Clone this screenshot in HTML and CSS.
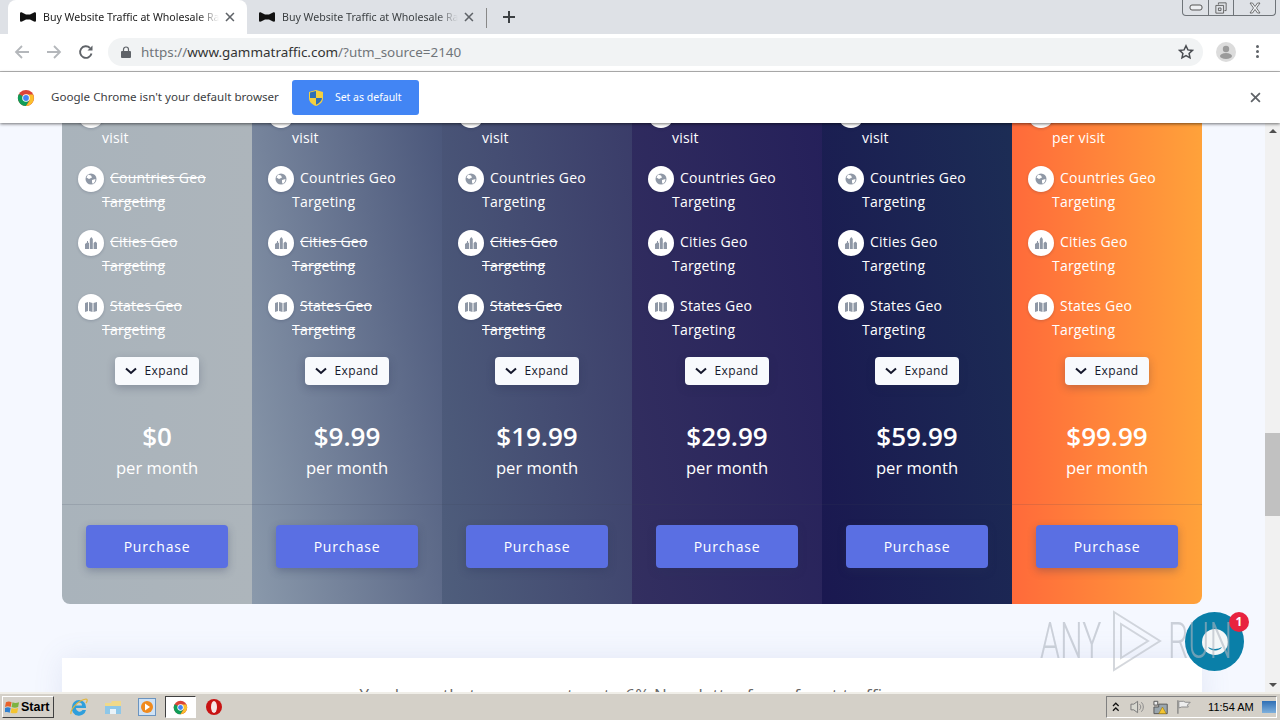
FILE: index.html
```html
<!DOCTYPE html>
<html lang="en">
<head>
    <meta charset="UTF-8">
    <title>Buy Website Traffic at Wholesale Rates</title>
    <link rel="stylesheet" href="styles.css">
</head>
<body>
    <svg class="defs" width="0" height="0">
        <symbol id="bow" viewBox="0 0 16 10"><path d="M0 1.500C0 .5 1 0 2 .4L6 2.600h4L14 .4C15 0 16 .5 16 1.500v7c0 1-1 1.500-2 1.100L10 7.400H6L2 9.600C1 10 0 9.500 0 8.500z" fill="#111"/></symbol>
        <symbol id="close" viewBox="0 0 10 10"><path d="M1 1l8 8M9 1l-8 8" fill="none" stroke="currentColor" stroke-width="1.600"/></symbol>
        <symbol id="chrome" viewBox="0 0 20 20"><circle cx="10" cy="10" r="9" fill="#db4437"/><path d="M10 10L2.200 5.500A9 9 0 0 0 10 19l4.500-7.800z" fill="#0f9d58"/><path d="M10 6h7.800A9 9 0 0 1 10 19l4-6z" fill="#fbc02d"/><circle cx="10" cy="10" r="4.200" fill="#fff"/><circle cx="10" cy="10" r="3.200" fill="#4285f4"/></symbol>
        <symbol id="globe" viewBox="0 0 12 12"><circle cx="6" cy="6" r="5.500" fill="#8f98a6"/><path d="M3 1.500l3 1 1 2-3 1.500-2.500-1.500zM7 7l3.500-1-.5 2.500-2 2.500-1-1.500z" fill="#fff"/></symbol>
        <symbol id="city" viewBox="0 0 12 12"><path d="M0 12V7l2-1.500V4h1v1.500L4 6v6zM4.800 12V2l1.500-2 1.500 2v10zM8.600 12V6l1.700-1.500L12 6v6z" fill="#8f98a6"/></symbol>
        <symbol id="map" viewBox="0 0 12 12"><path d="M0 2l3-1v9l-3 1zM4 1l3.500 1v9L4 10zM8.500 2L12 1v9l-3.500 1z" fill="#8f98a6"/></symbol>
        <symbol id="chevron" viewBox="0 0 12 8"><path d="M1 1.500L6 6l5-4.500" fill="none" stroke="#14172b" stroke-width="2"/></symbol>
    </svg>

    <!-- browser tabs -->
    <div class="tab-strip">
        <div class="tab tab-active">
            <svg class="favicon"><use href="#bow"/></svg>
            <span class="tab-title">Buy Website Traffic at Wholesale Rates</span>
            <svg class="tab-close"><use href="#close"/></svg>
        </div>
        <div class="tab">
            <svg class="favicon"><use href="#bow"/></svg>
            <span class="tab-title">Buy Website Traffic at Wholesale Rates</span>
            <svg class="tab-close"><use href="#close"/></svg>
        </div>
        <span class="tab-sep"></span>
        <svg class="new-tab" viewBox="0 0 12 12"><path d="M6 0v12M0 6h12" stroke="#3c4043" stroke-width="2"/></svg>
        <div class="window-btns">
            <span class="win-btn win-min"><svg viewBox="0 0 14 8"><rect x="1" y="1" width="12" height="5" rx="2" fill="#eef0f3" stroke="#555"/></svg></span>
            <span class="win-btn win-max"><svg viewBox="0 0 14 14"><path d="M4 3V1h9v9h-2M1 4h9v9H1zM4 7h3v3H4z" fill="none" stroke="#555"/></svg></span>
            <span class="win-btn win-x"><svg viewBox="0 0 14 10"><path d="M2 0l3.500 5L2 10h2.500L7 6.500 9.500 10H12L8.500 5 12 0H9.500L7 3.500 4.500 0z" fill="#eef0f3" stroke="#555" stroke-width=".8"/></svg></span>
        </div>
    </div>

    <!-- address bar -->
    <div class="toolbar">
        <svg class="nav-icon" viewBox="0 0 16 16"><path d="M15 8H2M8 2L2 8l6 6" fill="none" stroke="#b4b7bb" stroke-width="1.800"/></svg>
        <svg class="nav-icon" viewBox="0 0 16 16"><path d="M1 8h13M8 2l6 6-6 6" fill="none" stroke="#b4b7bb" stroke-width="1.800"/></svg>
        <svg class="nav-icon" viewBox="0 0 16 16"><path d="M13.500 9.500A5.800 5.800 0 1 1 12 4" fill="none" stroke="#5f6368" stroke-width="1.900"/><path d="M14.500 1.500v5h-5z" fill="#5f6368"/></svg>
        <div class="omnibox">
            <svg class="lock" viewBox="0 0 10 12"><path d="M2.500 5V3.500a2.500 2.500 0 0 1 5 0V5" fill="none" stroke="#5f6368" stroke-width="1.200"/><rect y="5" width="10" height="7" rx="1" fill="#5f6368"/></svg>
            <span class="url"><span class="url-dim">https://</span>www.gammatraffic.com<span class="url-dim">/?utm_source=2140</span></span>
            <svg class="star" viewBox="0 0 16 16"><path d="M8 1.800l1.900 4.100 4.500.5-3.300 3 .9 4.400L8 11.600l-4 2.200.9-4.400-3.300-3 4.500-.5z" fill="none" stroke="#4a4d52" stroke-width="1.500"/></svg>
        </div>
        <div class="avatar"><svg viewBox="0 0 20 20"><circle cx="10" cy="7" r="3.200" fill="#9b9b9b"/><ellipse cx="10" cy="14" rx="6" ry="3" fill="#9b9b9b"/></svg></div>
        <div class="menu-dots"><i></i><i></i><i></i></div>
    </div>

    <!-- default browser prompt -->
    <div class="infobar">
        <svg class="chrome-logo"><use href="#chrome"/></svg>
        <span class="info-text">Google Chrome isn't your default browser</span>
        <div class="default-btn">
            <svg class="shield" viewBox="0 0 14 16"><path d="M7 0l7 2v6c0 4-3 6.500-7 8-4-1.500-7-4-7-8V2z" fill="#f4d03f"/><path d="M7 1v7H1V2.600zM7 8h6c0 3-2.500 5-6 6.800z" fill="#2f6fb5"/></svg>
            <span class="default-label">Set as default</span>
        </div>
        <svg class="info-close"><use href="#close"/></svg>
    </div>

    <!-- scrolled page -->
    <div class="viewport">
        <div class="page">
            <div class="pricing">
                <div class="plan plan-free">
                    <ul class="features">
                        <li><span class="ficon"></span>Pay per<br>visit</li>
                        <li class="off"><span class="ficon"><svg><use href="#globe"/></svg></span><span class="ftext">Countries Geo Targeting</span></li>
                        <li class="off"><span class="ficon"><svg><use href="#city"/></svg></span><span class="ftext">Cities Geo Targeting</span></li>
                        <li class="off"><span class="ficon"><svg><use href="#map"/></svg></span><span class="ftext">States Geo Targeting</span></li>
                    </ul>
                    <div class="expand"><svg><use href="#chevron"/></svg>Expand</div>
                    <div class="price">$0</div>
                    <div class="period">per month</div>
                    <div class="plan-foot"><div class="purchase">Purchase</div></div>
                </div>
                <div class="plan plan-a">
                    <ul class="features">
                        <li><span class="ficon"></span>Pay per<br>visit</li>
                        <li><span class="ficon"><svg><use href="#globe"/></svg></span><span class="ftext">Countries Geo Targeting</span></li>
                        <li class="off"><span class="ficon"><svg><use href="#city"/></svg></span><span class="ftext">Cities Geo Targeting</span></li>
                        <li class="off"><span class="ficon"><svg><use href="#map"/></svg></span><span class="ftext">States Geo Targeting</span></li>
                    </ul>
                    <div class="expand"><svg><use href="#chevron"/></svg>Expand</div>
                    <div class="price">$9.99</div>
                    <div class="period">per month</div>
                    <div class="plan-foot"><div class="purchase">Purchase</div></div>
                </div>
                <div class="plan plan-b">
                    <ul class="features">
                        <li><span class="ficon"></span>Pay per<br>visit</li>
                        <li><span class="ficon"><svg><use href="#globe"/></svg></span><span class="ftext">Countries Geo Targeting</span></li>
                        <li class="off"><span class="ficon"><svg><use href="#city"/></svg></span><span class="ftext">Cities Geo Targeting</span></li>
                        <li class="off"><span class="ficon"><svg><use href="#map"/></svg></span><span class="ftext">States Geo Targeting</span></li>
                    </ul>
                    <div class="expand"><svg><use href="#chevron"/></svg>Expand</div>
                    <div class="price">$19.99</div>
                    <div class="period">per month</div>
                    <div class="plan-foot"><div class="purchase">Purchase</div></div>
                </div>
                <div class="plan plan-c">
                    <ul class="features">
                        <li><span class="ficon"></span>Pay per<br>visit</li>
                        <li><span class="ficon"><svg><use href="#globe"/></svg></span><span class="ftext">Countries Geo Targeting</span></li>
                        <li><span class="ficon"><svg><use href="#city"/></svg></span><span class="ftext">Cities Geo Targeting</span></li>
                        <li><span class="ficon"><svg><use href="#map"/></svg></span><span class="ftext">States Geo Targeting</span></li>
                    </ul>
                    <div class="expand"><svg><use href="#chevron"/></svg>Expand</div>
                    <div class="price">$29.99</div>
                    <div class="period">per month</div>
                    <div class="plan-foot"><div class="purchase">Purchase</div></div>
                </div>
                <div class="plan plan-d">
                    <ul class="features">
                        <li><span class="ficon"></span>Pay per<br>visit</li>
                        <li><span class="ficon"><svg><use href="#globe"/></svg></span><span class="ftext">Countries Geo Targeting</span></li>
                        <li><span class="ficon"><svg><use href="#city"/></svg></span><span class="ftext">Cities Geo Targeting</span></li>
                        <li><span class="ficon"><svg><use href="#map"/></svg></span><span class="ftext">States Geo Targeting</span></li>
                    </ul>
                    <div class="expand"><svg><use href="#chevron"/></svg>Expand</div>
                    <div class="price">$59.99</div>
                    <div class="period">per month</div>
                    <div class="plan-foot"><div class="purchase">Purchase</div></div>
                </div>
                <div class="plan plan-e">
                    <ul class="features">
                        <li><span class="ficon"></span>Pay<br>per visit</li>
                        <li><span class="ficon"><svg><use href="#globe"/></svg></span><span class="ftext">Countries Geo Targeting</span></li>
                        <li><span class="ficon"><svg><use href="#city"/></svg></span><span class="ftext">Cities Geo Targeting</span></li>
                        <li><span class="ficon"><svg><use href="#map"/></svg></span><span class="ftext">States Geo Targeting</span></li>
                    </ul>
                    <div class="expand"><svg><use href="#chevron"/></svg>Expand</div>
                    <div class="price">$99.99</div>
                    <div class="period">per month</div>
                    <div class="plan-foot"><div class="purchase">Purchase</div></div>
                </div>
            </div>
            <div class="note">You know that you can get up to 6% Newsletter free of cost traffic</div>
        </div>

        <div class="scrollbar">
            <span class="arrow arrow-up"></span>
            <div class="track"><div class="thumb"></div></div>
            <span class="arrow arrow-down"></span>
        </div>

        <!-- chat bubble and watermark sit over the page -->
        <div class="chat">
            <svg viewBox="0 0 30 30"><circle cx="15" cy="15" r="13" fill="#f4f7f8"/><path d="M8 20c4 2.500 10 2.500 14 0-2 4.500-12 4.500-14 0z" fill="#0a7fa8"/></svg>
            <span class="chat-badge">1</span>
        </div>
        <div class="watermark">
            <span class="wm-text">ANY</span>
            <svg viewBox="0 0 50 62"><path d="M2 2l46 29L2 60zM9 14v34l27-17z" fill="none" stroke="#b9bec6" stroke-width="2"/></svg>
            <span class="wm-text">RUN</span>
        </div>
    </div>

    <!-- windows taskbar -->
    <div class="taskbar">
        <div class="start">
            <svg viewBox="0 0 16 14"><path d="M1 2c2-1 4-1 6 0l-1 5c-2-1-4-1-6 0z" fill="#e8622a"/><path d="M8 2c2 1 4 1 7 0l-1 5c-2 1-5 1-7 0z" fill="#7cb342"/><path d="M0 8c2-1 4-1 6 0l-1 5c-2-1-4-1-6 0z" fill="#2f80d0"/><path d="M7 8c2 1 4 1 7 0l-1 5c-2 1-5 1-7 0z" fill="#f4c430"/></svg>
            <span>Start</span>
        </div>
        <div class="quick">
            <svg class="tray-app" viewBox="0 0 18 18"><path d="M2 9a7 7 0 0 1 14 0v1H6a3.500 3.500 0 0 0 6.500 2H16a7 7 0 0 1-14-3zM6 7.500h6a3 3 0 0 0-6 0z" fill="#2f9fdc"/><path d="M1 16C0 12 8 2 16 1c2 0 1 3 0 4" fill="none" stroke="#e3b63a" stroke-width="1.200"/></svg>
            <svg class="tray-app" viewBox="0 0 18 18"><path d="M1 5h6l1-2h9v12H1z" fill="#f0d98a"/><path d="M1 8h16v8H1z" fill="#8ec7e8"/><path d="M6 11h6v5H6z" fill="#e9f3f9"/></svg>
            <svg class="tray-app" viewBox="0 0 18 18"><rect x=".5" y=".5" width="17" height="17" fill="#cfe2f5" stroke="#6a94c0"/><circle cx="9" cy="9" r="6" fill="#f08a1d"/><path d="M7 5.500l5 3.500-5 3.500z" fill="#fff"/></svg>
            <div class="app-active"><svg><use href="#chrome"/></svg></div>
            <svg class="tray-app" viewBox="0 0 18 18"><circle cx="9" cy="9" r="8" fill="#c81313"/><ellipse cx="9" cy="9" rx="3" ry="6" fill="#f6e6e6"/></svg>
        </div>
        <div class="tray">
            <svg class="tray-chevrons" viewBox="0 0 8 10"><path d="M1 4l3-3 3 3M1 9l3-3 3 3" fill="none" stroke="#111" stroke-width="1.300"/></svg>
            <svg class="tray-icon" viewBox="0 0 16 16"><path d="M1 5h3l4-3v12l-4-3H1z" fill="#d8d8d0" stroke="#777"/><path d="M10 5a4 4 0 0 1 0 6M12 3a7 7 0 0 1 0 10" fill="none" stroke="#888"/></svg>
            <svg class="tray-icon" viewBox="0 0 16 16"><path d="M1 2h4v4H1z" fill="#eee" stroke="#555"/><path d="M6 5h9v10H1V8h5z" fill="#9aa6ad" stroke="#555"/><path d="M10 8l4 7H6z" fill="#f4c430" stroke="#8a6d00" stroke-width=".5"/></svg>
            <svg class="tray-icon" viewBox="0 0 16 16"><path d="M2 1v14" stroke="#777" stroke-width="1.200"/><path d="M3 2h5l2 1h5l-3 3 1 2H6L3 9z" fill="#eee" stroke="#888"/></svg>
            <span class="clock">11:54 AM</span>
            <span class="show-desktop"></span>
        </div>
    </div>
</body>
</html>
```

FILE: styles.css
```css
* {
    margin: 0;
    padding: 0;
    box-sizing: border-box;
}
html, body {
    width: 1280px;
    height: 720px;
    overflow: hidden;
}
body {
    display: flex;
    flex-direction: column;
    font-family: "Open Sans", "Liberation Sans", sans-serif;
    background-color: #fff;
}
.defs {
    position: absolute;
}

/* tabs */
.tab-strip {
    height: 34px;
    flex-shrink: 0;
    display: flex;
    align-items: flex-end;
    padding-left: 8px;
    background-color: #dee1e6;
}
.tab {
    width: 239px;
    height: 34px;
    display: flex;
    align-items: center;
    padding: 0 12px 1px;
    font-family: "Noto Sans", "Open Sans", sans-serif;
    font-size: 10.6px;
    color: #3c4043;
}
.tab-active {
    background-color: #fff;
    border-radius: 8px 8px 0 0;
    color: #222;
}
.favicon {
    width: 16px;
    height: 10px;
    margin-right: 7px;
    flex-shrink: 0;
}
.tab-title {
    width: 178px;
    white-space: nowrap;
    overflow: hidden;
    -webkit-mask-image: linear-gradient(to right, #000 88%, transparent);
    mask-image: linear-gradient(to right, #000 88%, transparent);
}
.tab-close {
    width: 10px;
    height: 10px;
    margin-left: 6px;
    color: #5f6368;
}
.tab-sep {
    width: 1px;
    height: 20px;
    margin: 0 0 6px 0;
    background-color: #888;
}
.new-tab {
    width: 12px;
    height: 12px;
    margin: 0 0 11px 16px;
}
.window-btns {
    display: flex;
    margin-left: auto;
    margin-right: 4px;
    align-self: flex-start;
    height: 16px;
    border: 1px solid #6f7479;
    border-top: 0;
    border-radius: 0 0 4px 4px;
}
.win-btn {
    display: flex;
    align-items: center;
    justify-content: center;
    border-left: 1px solid #6f7479;
}
.win-btn svg {
    width: 14px;
    height: 12px;
}
.win-min {
    width: 25px;
    border-left: 0;
}
.win-max {
    width: 25px;
}
.win-x {
    width: 42px;
}

/* address bar */
.toolbar {
    height: 38px;
    flex-shrink: 0;
    display: flex;
    align-items: center;
    padding: 0 0 2px 14px;
    background-color: #fff;
    border-bottom: 1px solid #b9b9b9;
}
.nav-icon {
    width: 16px;
    height: 16px;
    margin-right: 16px;
}
.omnibox {
    width: 1095px;
    height: 28px;
    display: flex;
    align-items: center;
    padding: 0 9px 0 13px;
    margin-left: -2px;
    background-color: #f1f3f4;
    border-radius: 14px;
}
.lock {
    width: 10px;
    height: 12px;
}
.url {
    margin-left: 10px;
    font-family: "Noto Sans", "Open Sans", sans-serif;
    font-size: 13.45px;
    color: #333;
}
.url-dim {
    color: #70757a;
}
.star {
    width: 16px;
    height: 16px;
    margin-left: auto;
}
.avatar {
    width: 20px;
    height: 20px;
    margin-left: 13px;
    border-radius: 50%;
    background-color: #dcdcdc;
}
.menu-dots {
    display: flex;
    flex-direction: column;
    gap: 2px;
    margin-left: 20px;
}
.menu-dots i {
    width: 3px;
    height: 3px;
    border-radius: 50%;
    background-color: #5f6368;
}

/* infobar */
.infobar {
    height: 51px;
    flex-shrink: 0;
    display: flex;
    align-items: center;
    padding: 0 17px;
    background-color: #fff;
    position: relative;
    z-index: 2;
    box-shadow: 0 1px 3px rgba(0, 0, 0, .55);
}
.chrome-logo {
    width: 18px;
    height: 18px;
}
.info-text {
    margin: 0 0 2px 16px;
    font-family: "Noto Sans", "Open Sans", sans-serif;
    font-size: 11.6px;
    color: #3c4043;
}
.default-btn {
    width: 127px;
    height: 35px;
    display: flex;
    align-items: center;
    margin-left: 13px;
    padding-left: 17px;
    border-radius: 3px;
    background-color: #4285f4;
    font-family: "Noto Sans", "Open Sans", sans-serif;
    font-size: 10.5px;
    color: #fff;
}
.default-label {
    margin-bottom: 2px;
}
.shield {
    width: 14px;
    height: 16px;
    margin-right: 12px;
}
.info-close {
    width: 11px;
    height: 11px;
    margin-left: auto;
    margin-right: 2px;
    color: #5f6368;
}

/* page */
.viewport {
    flex: 1;
    min-height: 0;
    display: flex;
    position: relative;
    overflow: hidden;
    background-color: #f5f8ff;
}
.page {
    flex: 1;
    min-width: 0;
    padding: 0 63px 0 62px;
}
.pricing {
    display: flex;
    margin-top: -22px;
    border-radius: 8px;
    overflow: hidden;
}
.plan {
    width: 190px;
    flex-shrink: 0;
    color: #fff;
    text-align: center;
}
.plan-free {
    background: linear-gradient(to right, #a9b3bb, #adb5bb);
}
.plan-a {
    background: linear-gradient(80deg, #8a99ab, #4a567a);
}
.plan-b {
    background: linear-gradient(80deg, #4f5e7c, #3a3c69);
}
.plan-c {
    background: linear-gradient(80deg, #332f60, #25205a);
}
.plan-d {
    background: linear-gradient(80deg, #1a1850, #1c2d55);
}
.plan-e {
    background: linear-gradient(to right, #ff6a3a, #ffa23a);
}
.features {
    list-style: none;
    text-align: left;
    padding: 1px 10px 0 0;
    margin-bottom: -1px;
}
.features li {
    padding-left: 40px;
    margin-bottom: 16px;
    font-size: 14px;
    line-height: 24px;
    letter-spacing: .2px;
}
.ficon {
    display: inline-flex;
    align-items: center;
    justify-content: center;
    width: 26px;
    height: 26px;
    margin: -4px 6px -4px -24px;
    vertical-align: middle;
    border-radius: 50%;
    background-color: #fff;
    box-shadow: 0 1px 3px rgba(30, 40, 70, .2);
}
.ficon svg {
    width: 12px;
    height: 12px;
}
.off .ftext {
    text-decoration: line-through;
}
.expand {
    width: 84px;
    height: 28px;
    display: flex;
    align-items: center;
    justify-content: center;
    gap: 7px;
    margin: 0 auto;
    padding-bottom: 1px;
    border-radius: 4px;
    background-color: #f8fafd;
    box-shadow: 0 3px 8px rgba(30, 40, 70, .25);
    font-size: 12px;
    letter-spacing: .4px;
    color: #14172b;
}
.expand svg {
    width: 12px;
    height: 8px;
}
.price {
    margin-top: 33px;
    font-size: 26px;
    line-height: 36px;
    font-weight: 600;
}
.period {
    font-size: 16.6px;
    line-height: 28px;
}
.plan-foot {
    margin-top: 22px;
    padding: 20px 24px 36px;
    border-top: 1px solid rgba(60, 70, 90, .15);
}
.purchase {
    height: 43px;
    line-height: 43px;
    border-radius: 4px;
    background-color: #5a6fe3;
    box-shadow: 0 3px 8px rgba(40, 50, 90, .3);
    font-size: 14px;
    letter-spacing: .8px;
}
.note {
    height: 80px;
    margin-top: 54px;
    padding: 25px 14px 0 0;
    background-color: #fff;
    box-shadow: 0 0 30px rgba(90, 110, 170, .12);
    text-align: center;
    font-size: 17px;
    line-height: 24px;
    letter-spacing: .2px;
    color: #666;
}

/* scrollbar */
.scrollbar {
    width: 15px;
    flex-shrink: 0;
    display: flex;
    flex-direction: column;
    background-color: #f1f1f1;
}
.arrow {
    height: 15px;
    flex-shrink: 0;
    display: flex;
    align-items: center;
    justify-content: center;
}
.arrow::before {
    content: "";
    border-left: 4px solid transparent;
    border-right: 4px solid transparent;
}
.arrow-up::before {
    border-bottom: 4px solid #505050;
}
.arrow-down::before {
    border-top: 4px solid #505050;
}
.track {
    flex: 1;
    padding-top: 295px;
}
.thumb {
    height: 83px;
    background-color: #c1c1c1;
}

/* overlays */
.chat {
    position: absolute;
    left: 1185px;
    top: 489px;
    width: 59px;
    height: 59px;
    display: flex;
    align-items: center;
    justify-content: center;
    border-radius: 50%;
    background-color: #0a7fa8;
}
.chat svg {
    width: 30px;
    height: 30px;
}
.chat-badge {
    position: absolute;
    top: 0;
    right: -5px;
    width: 20px;
    height: 20px;
    border-radius: 50%;
    background-color: #e8233f;
    text-align: center;
    font-size: 12px;
    font-weight: 700;
    line-height: 20px;
    color: #fff;
}
.watermark {
    position: absolute;
    left: 1040px;
    top: 487px;
    display: flex;
    align-items: center;
}
.wm-text {
    width: 60px;
    font-family: Roboto, "Liberation Sans", sans-serif;
    font-size: 50px;
    font-weight: 300;
    white-space: nowrap;
    color: rgba(175, 182, 192, .6);
    transform: scaleX(.64);
    transform-origin: left center;
}
.watermark svg {
    width: 50px;
    height: 62px;
    margin: 0 6px 0 12px;
    opacity: .6;
}

/* taskbar */
.taskbar {
    height: 28px;
    flex-shrink: 0;
    display: flex;
    align-items: center;
    background-color: #d4d0c8;
    border-top: 2px solid #f0eee8;
    position: relative;
    z-index: 3;
}
.start {
    width: 52px;
    height: 22px;
    display: flex;
    align-items: center;
    gap: 1px;
    margin-left: 2px;
    padding-left: 2px;
    border: 1px solid;
    border-color: #fff #404040 #404040 #fff;
    font-family: "Liberation Sans", sans-serif;
    font-size: 12.5px;
    font-weight: 700;
    color: #000;
}
.start svg {
    width: 15px;
    height: 14px;
}
.quick {
    display: flex;
    align-items: center;
    margin-left: 16px;
    gap: 16px;
}
.tray-app {
    width: 18px;
    height: 18px;
}
.app-active {
    width: 31px;
    height: 22px;
    display: flex;
    align-items: center;
    justify-content: center;
    margin: 0 -7px;
    background-color: #fff;
    border: 1px solid;
    border-color: #404040 #fff #fff #404040;
}
.app-active svg {
    width: 15px;
    height: 15px;
}
.tray {
    width: 171px;
    height: 22px;
    display: flex;
    align-items: center;
    margin-left: auto;
    margin-right: 3px;
    padding-left: 5px;
    border: 1px solid;
    border-color: #808080 #fff #fff #808080;
    font-family: "Liberation Sans", sans-serif;
    font-size: 11px;
    color: #000;
}
.tray-chevrons {
    width: 8px;
    height: 10px;
    margin-right: 10px;
}
.tray-icon {
    width: 16px;
    height: 16px;
    margin-right: 8px;
}
.clock {
    margin-left: 9px;
    white-space: nowrap;
}
.show-desktop {
    width: 15px;
    height: 12px;
    margin-left: 8px;
    background: linear-gradient(#2f6fb5, #7fb0dc);
}
```
